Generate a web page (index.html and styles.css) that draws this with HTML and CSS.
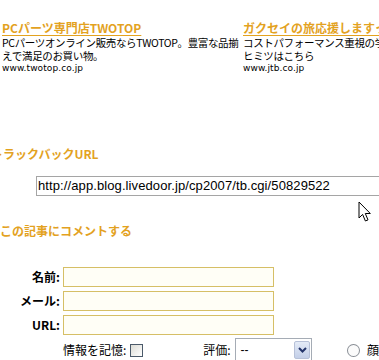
FILE: index.html
```html
<!DOCTYPE html>
<html lang="ja">
<head>
<meta charset="utf-8">
<link rel="stylesheet" href="styles.css">
</head>
<body>
<div class="page">
  <div class="ads">
    <div class="ad">
      <div class="ad-title">PCパーツ専門店TWOTOP</div>
      <div class="ad-text"><span class="line">PCパーツオンライン販売ならTWOTOP。豊富な品揃</span><span class="line">えで満足のお買い物。</span></div>
      <div class="ad-url">www.twotop.co.jp</div>
    </div>
    <div class="ad">
      <div class="ad-title">ガクセイの旅応援しますっ</div>
      <div class="ad-text"><span class="line">コストパフォーマンス重視の学生旅行の</span><span class="line">ヒミツはこちら</span></div>
      <div class="ad-url">www.jtb.co.jp</div>
    </div>
  </div>

  <h3 class="heading tb-heading">トラックバックURL</h3>
  <div class="tb-row">
    <div class="tb-input">http://app.blog.livedoor.jp/cp2007/tb.cgi/50829522</div>
  </div>

  <h3 class="heading cm-heading">この記事にコメントする</h3>
  <div class="form">
    <label class="lbl">名前:</label><div class="field"></div>
    <label class="lbl">メール:</label><div class="field"></div>
    <label class="lbl">URL:</label><div class="field"></div>
  </div>
  <div class="opts">
    <span class="opt-lbl">情報を記憶:</span>
    <span class="checkbox"></span>
    <span class="opt-lbl rate">評価:</span>
    <div class="select">
      <span class="sel-text">--</span>
      <span class="sel-btn"><svg width="9" height="6" viewBox="0 0 9 6"><path d="M1 1 L4.5 4.5 L8 1" fill="none" stroke="#24356b" stroke-width="2"/></svg></span>
    </div>
    <span class="radio"></span>
    <span class="opt-lbl face">顔</span>
  </div>

  <svg class="cursor" width="14" height="22" viewBox="0 0 14 22">
    <path d="M1 1 L1 17 L4.6 13.4 L7.4 20 L10 18.9 L7.3 12.5 L12.3 12.5 Z" fill="#fff" stroke="#000" stroke-width="1" stroke-linejoin="miter"/>
  </svg>
</div>
</body>
</html>
```

FILE: styles.css
```css
html, body {
  margin: 0;
  padding: 0;
  background: #ffffff;
  overflow: hidden;
}

.page {
  position: relative;
  width: 379px;
  height: 360px;
  overflow: hidden;
  font-family: "Noto Sans CJK JP", "Liberation Sans", sans-serif;
  color: #000;
}

.ads {
  display: flex;
  padding-top: 20px;
  width: 600px;
}

.ad {
  width: 239px;
  flex: none;
  padding-left: 2px;
}

.ad-title {
  font-size: 12px;
  font-weight: bold;
  line-height: 15px;
  color: #e3a21f;
  text-decoration: underline;
  text-underline-offset: 2px;
  white-space: nowrap;
}

.ad-text {
  margin-top: 2px;
  font-size: 10.5px;
  line-height: 12.5px;
  letter-spacing: -0.35px;
}

.line {
  display: block;
  white-space: nowrap;
}

.ad-url {
  margin-top: 1px;
  font-family: "DejaVu Sans", "Liberation Sans", sans-serif;
  font-size: 9px;
  line-height: 11px;
  letter-spacing: 0.1px;
}

.heading {
  margin: 0;
  font-size: 12px;
  font-weight: bold;
  line-height: 14px;
  color: #e3a21f;
  white-space: nowrap;
}

.tb-heading {
  margin-top: 73px;
  margin-left: -9px;
}

.tb-row {
  padding-left: 36px;
  margin-top: 15px;
}

.tb-input {
  width: 360px;
  height: 18px;
  border: 1px solid #a5a5a5;
  font-family: "Liberation Sans", "DejaVu Sans", sans-serif;
  font-size: 13px;
  line-height: 18px;
  padding-left: 1px;
  white-space: nowrap;
  letter-spacing: 0.1px;
}

.cm-heading {
  margin-top: 28px;
}

.form {
  display: grid;
  grid-template-columns: 60px 211px;
  column-gap: 3px;
  row-gap: 4px;
  margin-top: 29px;
  align-items: center;
}

.lbl {
  font-size: 12px;
  font-weight: bold;
  text-align: right;
  line-height: 20px;
  white-space: nowrap;
}

.field {
  height: 18px;
  border: 1px solid #d6bf66;
  background: #fffef6;
}

.opts {
  display: flex;
  align-items: center;
  padding-left: 63px;
  margin-top: 3px;
  height: 24px;
}

.opt-lbl {
  font-size: 12px;
  line-height: 14px;
  white-space: nowrap;
}

.checkbox {
  width: 11px;
  height: 11px;
  border: 1px solid #4b5a6a;
  background: linear-gradient(135deg, #dcdcd6, #ffffff);
  margin-left: 4px;
}

.rate {
  margin-left: 60px;
}

.select {
  display: flex;
  align-items: center;
  width: 77px;
  height: 22px;
  border: 1px solid #a5acb5;
  margin-left: 4px;
  background: #fff;
}

.sel-text {
  flex: 1;
  font-family: "Liberation Sans", sans-serif;
  font-size: 12px;
  padding-left: 5px;
}

.sel-btn {
  width: 16px;
  height: 18px;
  margin-right: 1px;
  border: 1px solid #b7c1d8;
  border-radius: 2px;
  background: linear-gradient(#e4ebf7, #c3cfe8);
  display: flex;
  align-items: center;
  justify-content: center;
  box-sizing: border-box;
}

.radio {
  width: 11px;
  height: 11px;
  border: 1px solid #8a8f96;
  border-radius: 50%;
  background: #fbfbfb;
  margin-left: 35px;
}

.face {
  margin-left: 7px;
}

.cursor {
  position: absolute;
  left: 358px;
  top: 201px;
}
```
